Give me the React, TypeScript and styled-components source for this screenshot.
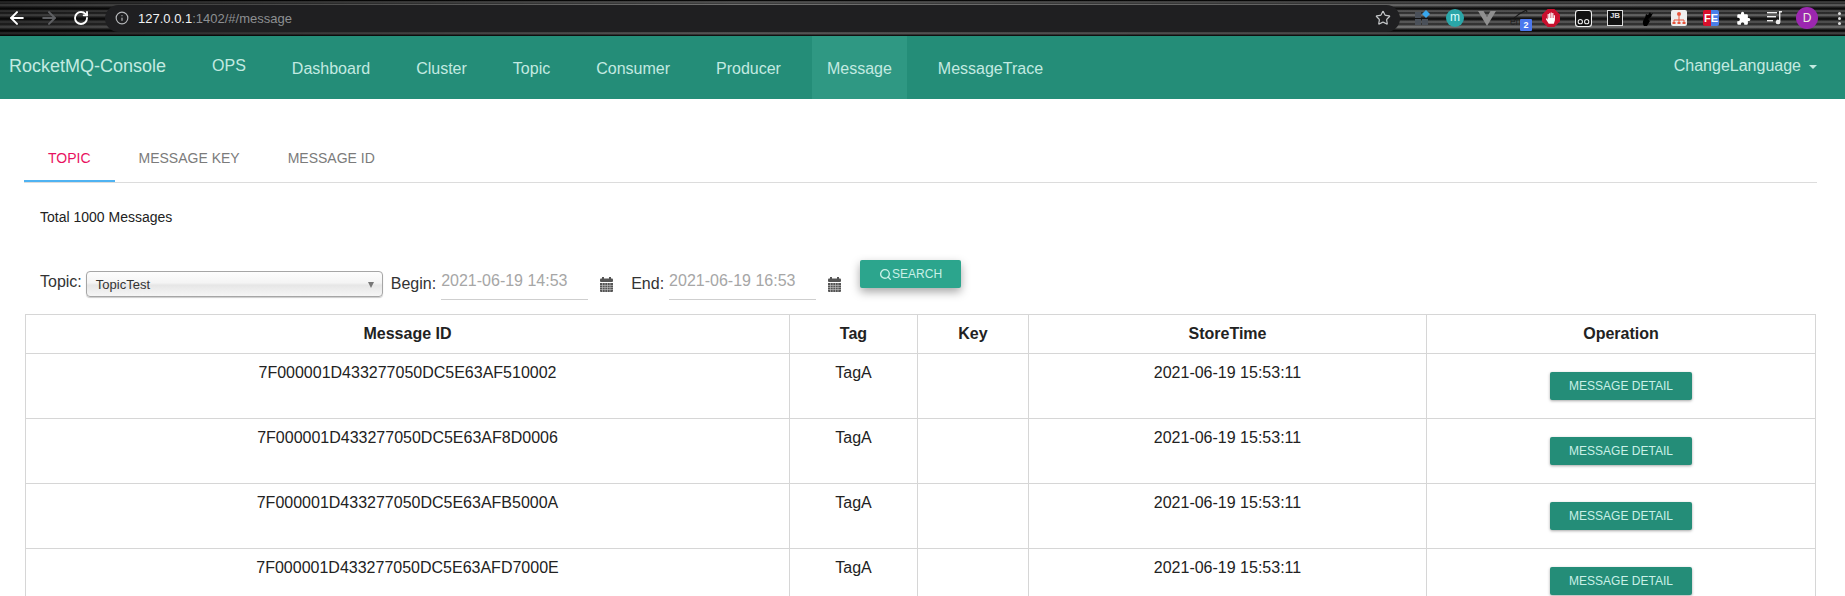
import React from "react";
import styled, { createGlobalStyle } from "styled-components";
import { ArrowLeft, ArrowRight, Info, RotateCw, Search, Star } from "lucide-react";

const GlobalStyle = createGlobalStyle`
  html, body {
    margin: 0;
    height: 596px;
    overflow: hidden;
    background: #fff;
    font-family: "Liberation Sans", Arial, sans-serif;
  }
`;

const teal = "#248d78";
const navText = "#c3eae1";

const BrowserBar = styled.div`
  height: 36px;
  display: flex;
  align-items: center;
  padding: 0 0 0 2px;
  box-sizing: border-box;
  overflow: hidden;
  background:
    linear-gradient(90deg, rgba(0, 0, 0, 0.55) 0, rgba(0, 0, 0, 0) 40%, rgba(0, 0, 0, 0.25) 100%),
    linear-gradient(180deg, #000 0, #111 1px, #7a7a7a 2px, #222 3px, #8a8a8a 5px, #333 7px, #050505 9px, #777 11px, #222 13px, #8f8f8f 15px, #3a3a3a 17px, #0a0a0a 19px, #777 22px, #2a2a2a 24px, #999 27px, #333 29px, #000 31px, #666 33px, #000 36px);
`;

const NavIcon = styled.span<{ $dim?: boolean }>`
  width: 30px;
  height: 24px;
  margin-right: 2px;
  flex-shrink: 0;
  display: flex;
  align-items: center;
  justify-content: center;
  color: ${({ $dim }) => ($dim ? "#5f6063" : "#fff")};
`;

const Omnibox = styled.div`
  margin-left: 7px;
  width: 1295px;
  height: 27px;
  flex-shrink: 0;
  border-radius: 14px;
  background: #1f1f21;
  display: flex;
  align-items: center;
  padding: 0 9px 0 10px;
  box-sizing: border-box;
  font-size: 13px;
  color: #8d8f92;
`;

const Host = styled.span`
  color: #f1f3f4;
  margin-left: 9px;
`;

const StarSlot = styled.span`
  margin-left: auto;
  display: flex;
  color: #c4c6c8;
`;

const Extensions = styled.div`
  display: flex;
  flex-shrink: 0;
  align-items: center;
  margin-left: 7px;
`;

const Ext = styled.span`
  position: relative;
  width: 32px;
  height: 24px;
  display: flex;
  align-items: center;
  justify-content: center;
`;

const MBadge = styled.span`
  width: 18px;
  height: 18px;
  border-radius: 50%;
  background: #2aa6a8;
  color: #dff;
  font-size: 12px;
  line-height: 16px;
  text-align: center;
`;

const CountBadge = styled.span`
  position: absolute;
  left: 17px;
  bottom: -1px;
  width: 12px;
  height: 12px;
  border-radius: 1px;
  background: #4c78ee;
  color: #fff;
  font-size: 9px;
  font-weight: bold;
  line-height: 12px;
  text-align: center;
`;

const EnLabel = styled.span`
  position: absolute;
  left: 7px;
  bottom: 3px;
  color: #222;
  font-size: 10px;
  line-height: 10px;
`;

const InkStroke = styled.svg`
  margin: 0 0 10px 4px;
`;

const JbBox = styled.span`
  width: 14px;
  height: 14px;
  border: 1px solid #ddd;
  background: #111;
  color: #ddd;
  font-size: 8px;
  font-weight: bold;
  line-height: 10px;
  text-align: center;
`;

const FeBox = styled.span`
  width: 16px;
  height: 16px;
  border-radius: 2px;
  background: linear-gradient(90deg, #d8102b 0 50%, #4a7fe8 50% 100%);
  color: #fff;
  font-size: 11px;
  font-weight: bold;
  line-height: 16px;
  text-align: center;
`;

const Avatar = styled.span`
  width: 22px;
  height: 22px;
  border-radius: 50%;
  background: #9c27b0;
  color: #eed;
  font-size: 12px;
  line-height: 22px;
  text-align: center;
`;

const Dots = styled.span`
  width: 3px;
  height: 3px;
  border-radius: 50%;
  background: #ddd;
  box-shadow: 0 -5px 0 #ddd, 0 5px 0 #ddd;
`;

const NavBar = styled.nav`
  height: 63px;
  background: ${teal};
  display: flex;
  align-items: stretch;
  padding: 0 28px 0 9px;
  color: ${navText};
  font-size: 16px;
`;

const Brand = styled.div`
  font-size: 18px;
  padding-top: 20px;
  margin-right: 31px;
`;

const NavItem = styled.div<{ $active?: boolean; $high?: boolean }>`
  padding: ${({ $high }) => ($high ? "21px" : "24px")} 15px 0;
  margin-left: ${({ $high }) => ($high ? "0" : "16px")};
  background: ${({ $active }) => ($active ? "#2f9883" : "transparent")};
`;

const LangMenu = styled.div`
  margin-left: auto;
  padding-top: 21px;
  display: flex;
  align-items: flex-start;
`;

const Caret = styled.span`
  width: 0;
  height: 0;
  margin: 8px 0 0 8px;
  border-left: 4px solid transparent;
  border-right: 4px solid transparent;
  border-top: 4px solid ${navText};
`;

const Content = styled.main`
  padding: 0 28px 0 24px;
`;

const Tabs = styled.div`
  margin-top: 35px;
  height: 48px;
  display: flex;
  box-sizing: content-box;
  border-bottom: 1px solid #dcdcdc;
`;

const Tab = styled.div<{ $active?: boolean }>`
  padding: 16px 24px 0;
  box-sizing: border-box;
  height: 48px;
  font-size: 14px;
  color: ${({ $active }) => ($active ? "#e8115f" : "#7b7b7b")};
  border-bottom: ${({ $active }) => ($active ? "2px solid #4fb3f2" : "none")};
`;

const Total = styled.div`
  margin: 26px 0 0 16px;
  font-size: 14px;
  line-height: 16px;
  color: #222;
`;

const Filters = styled.div`
  margin: 34px 0 0 16px;
  height: 55px;
  display: flex;
  align-items: flex-start;
  font-size: 16px;
  color: #333;
`;

const FilterLabel = styled.span<{ $top: number }>`
  margin-top: ${({ $top }) => $top}px;
  line-height: 20px;
`;

const SelectBox = styled.div`
  width: 297px;
  height: 26px;
  margin: 12px 8px 0 4px;
  box-sizing: border-box;
  border: 1px solid #a6a6a6;
  border-radius: 4px;
  background: linear-gradient(180deg, #fdfdfd 0, #f4f4f4 45%, #e6e6e6 55%, #f6f6f6 100%);
  box-shadow: 0 1px 1px rgba(0, 0, 0, 0.2);
  display: flex;
  align-items: center;
  justify-content: space-between;
  padding: 1px 8px 0 9px;
  font-size: 13px;
  color: #333;
`;

const SelectArrow = styled.span`
  width: 0;
  height: 0;
  border-left: 3.5px solid transparent;
  border-right: 3.5px solid transparent;
  border-top: 6px solid #777;
`;

const DateInput = styled.div`
  width: 147px;
  height: 30px;
  margin: 11px 0 0 5px;
  box-sizing: border-box;
  border-bottom: 1px solid #cfcfcf;
  font-size: 16px;
  line-height: 22px;
  color: #a6a6a6;
`;

const CalendarSlot = styled.span<{ $gap: number }>`
  margin: 18px ${({ $gap }) => $gap}px 0 11px;
  display: flex;
`;

const SearchButton = styled.button`
  width: 101px;
  height: 28px;
  margin-top: 1px;
  padding: 0;
  border: none;
  border-radius: 2px;
  background: #2ca58d;
  color: #c9f0e7;
  font: 12px "Liberation Sans", Arial, sans-serif;
  display: flex;
  align-items: center;
  justify-content: center;
  box-shadow: 0 4px 10px rgba(0, 0, 0, 0.35);
`;

const Table = styled.table`
  width: 1790px;
  margin-left: 1px;
  border-collapse: collapse;
  table-layout: fixed;
  font-size: 16px;
  color: #222;
`;

const Th = styled.th`
  height: 38px;
  padding: 0;
  border: 1px solid #d6d6d6;
  font-size: 16px;
  text-align: center;
`;

const Td = styled.td`
  height: 65px;
  padding: 9px 0 0;
  box-sizing: border-box;
  border: 1px solid #d6d6d6;
  text-align: center;
  vertical-align: top;
  line-height: 20px;
`;

const DetailButton = styled.button`
  width: 142px;
  height: 28px;
  margin-top: 9px;
  padding: 0;
  border: none;
  border-radius: 2px;
  background: ${teal};
  color: #c9f0e7;
  font: 12px "Liberation Sans", Arial, sans-serif;
  box-shadow: 0 1px 3px rgba(0, 0, 0, 0.35);
`;

const CalendarIcon = () => (
  <svg width="15" height="15" viewBox="0 0 15 15" fill="#555">
    <rect x="3" y="0" width="2" height="3" />
    <rect x="10" y="0" width="2" height="3" />
    <rect x="1" y="1.5" width="13" height="3.5" rx="1" />
    <path d="M1 6h13v8a1 1 0 0 1-1 1H2a1 1 0 0 1-1-1z" />
    <path d="M1 8.5h13M1 10.5h13M1 12.5h13M3.5 6v9M6 6v9M8.5 6v9M11 6v9" stroke="#c8c8c8" strokeWidth="0.6" />
  </svg>
);

const messages = [
  "7F000001D433277050DC5E63AF510002",
  "7F000001D433277050DC5E63AF8D0006",
  "7F000001D433277050DC5E63AFB5000A",
  "7F000001D433277050DC5E63AFD7000E",
];

const navLinks = ["Dashboard", "Cluster", "Topic", "Consumer", "Producer", "Message", "MessageTrace"];

const App: React.FC = () => {
  return (
    <>
      <GlobalStyle />
      <BrowserBar>
        <NavIcon><ArrowLeft size={20} strokeWidth={2.4} /></NavIcon>
        <NavIcon $dim><ArrowRight size={20} strokeWidth={2.4} /></NavIcon>
        <NavIcon><RotateCw size={16} strokeWidth={2.8} /></NavIcon>
        <Omnibox>
          <Info size={14} color="#b5b7ba" />
          <Host>127.0.0.1</Host>:1402/#/message
          <StarSlot><Star size={16} strokeWidth={1.8} /></StarSlot>
        </Omnibox>
        <Extensions>
          <Ext>
            <svg width="16" height="16" viewBox="0 0 16 16">
              <rect x="0" y="2" width="6" height="6" fill="#4a5059" />
              <rect x="0" y="9" width="6" height="6" fill="#4a5059" />
              <rect x="7" y="9" width="6" height="6" fill="#4a5059" />
              <path d="M11 0l4 4-4 4-4-4z" fill="#38a7ee" />
            </svg>
          </Ext>
          <Ext><MBadge>m</MBadge></Ext>
          <Ext>
            <svg width="18" height="15" viewBox="0 0 18 15">
              <path d="M0 0h5.5L9 6l3.5-6H18L9 15z" fill="#8f8f8f" />
            </svg>
          </Ext>
          <Ext>
            <InkStroke width="16" height="11" viewBox="0 0 18 12" fill="none" stroke="#1a1a1a" strokeWidth="1.4">
              <path d="M1 11c3-1 5-5 9-6l5-3" />
              <path d="M13 1l3 3" />
            </InkStroke>
            <EnLabel>en</EnLabel>
            <CountBadge>2</CountBadge>
          </Ext>
          <Ext>
            <svg width="18" height="18" viewBox="0 0 16 16">
              <path d="M5 0h6l5 5v6l-5 5H5l-5-5V5z" fill="#c8102e" />
              <path d="M5 4.5v5L4 8 3.5 9 6 13h4.5l1-3V5.5h-1V8h-.4V3.5h-1V8h-.4V3h-1v5h-.4V3.8h-1V8h-.3V4.5z" fill="#fff" />
            </svg>
          </Ext>
          <Ext>
            <svg width="17" height="17" viewBox="0 0 16 16">
              <rect x="0.5" y="0.5" width="15" height="15" rx="2.5" fill="#111" stroke="#eee" />
              <circle cx="5" cy="11" r="2" fill="none" stroke="#eee" />
              <circle cx="11" cy="11" r="2" fill="none" stroke="#eee" />
            </svg>
          </Ext>
          <Ext><JbBox>JB</JbBox></Ext>
          <Ext>
            <svg width="14" height="15" viewBox="0 0 14 15">
              <path d="M4 15c-2-3-1-6 1-8l1-4 2 1 2-3 1 2 2-1-2 4-3 2 2 2-3 5z" fill="#000" />
            </svg>
          </Ext>
          <Ext>
            <svg width="16" height="16" viewBox="0 0 16 16">
              <rect width="16" height="16" rx="2" fill="#eee" />
              <circle cx="8" cy="4" r="2" fill="#e8553c" />
              <path d="M8 6v4M3 13v-3h10v3M8 10v3" fill="none" stroke="#e8553c" />
              <rect x="1.5" y="12" width="3" height="2" fill="#e8553c" />
              <rect x="6.5" y="12" width="3" height="2" fill="#e8553c" />
              <rect x="11.5" y="12" width="3" height="2" fill="#e8553c" />
            </svg>
          </Ext>
          <Ext><FeBox>FE</FeBox></Ext>
          <Ext>
            <svg width="15" height="15" viewBox="0 0 24 24" fill="#fff">
              <path d="M20.5 11H19V7a2 2 0 0 0-2-2h-4V3.5a2.5 2.5 0 0 0-5 0V5H4a2 2 0 0 0-2 2v3.8h1.5a2.7 2.7 0 0 1 0 5.4H2V20a2 2 0 0 0 2 2h3.8v-1.5a2.7 2.7 0 0 1 5.4 0V22H17a2 2 0 0 0 2-2v-4h1.5a2.5 2.5 0 0 0 0-5z" />
            </svg>
          </Ext>
          <Ext>
            <svg width="16" height="14" viewBox="0 0 16 14" fill="#eee">
              <rect x="0" y="1" width="10" height="1.4" />
              <rect x="0" y="5" width="9" height="1.4" />
              <rect x="0" y="9" width="6" height="1.4" />
              <path d="M12 0h3v1.5h-1.6V11a2.3 2.3 0 1 1-1.4-2.1z" />
            </svg>
          </Ext>
          <Ext><Avatar>D</Avatar></Ext>
          <Ext><Dots /></Ext>
        </Extensions>
      </BrowserBar>
      <NavBar>
        <Brand>RocketMQ-Console</Brand>
        <NavItem $high>OPS</NavItem>
        {navLinks.map((link) => (
          <NavItem key={link} $active={link === "Message"}>{link}</NavItem>
        ))}
        <LangMenu>ChangeLanguage<Caret /></LangMenu>
      </NavBar>
      <Content>
        <Tabs>
          <Tab $active>TOPIC</Tab>
          <Tab>MESSAGE KEY</Tab>
          <Tab>MESSAGE ID</Tab>
        </Tabs>
        <Total>Total 1000 Messages</Total>
        <Filters>
          <FilterLabel $top={13}>Topic:</FilterLabel>
          <SelectBox>TopicTest<SelectArrow /></SelectBox>
          <FilterLabel $top={15}>Begin:</FilterLabel>
          <DateInput>2021-06-19 14:53</DateInput>
          <CalendarSlot $gap={17}><CalendarIcon /></CalendarSlot>
          <FilterLabel $top={15}>End:</FilterLabel>
          <DateInput>2021-06-19 16:53</DateInput>
          <CalendarSlot $gap={18}><CalendarIcon /></CalendarSlot>
          <SearchButton><Search size={13} strokeWidth={2.6} />SEARCH</SearchButton>
        </Filters>
        <Table>
          <colgroup>
            <col style={{ width: 764 }} />
            <col style={{ width: 128 }} />
            <col style={{ width: 111 }} />
            <col style={{ width: 398 }} />
            <col style={{ width: 389 }} />
          </colgroup>
          <thead>
            <tr>
              <Th>Message ID</Th>
              <Th>Tag</Th>
              <Th>Key</Th>
              <Th>StoreTime</Th>
              <Th>Operation</Th>
            </tr>
          </thead>
          <tbody>
            {messages.map((id) => (
              <tr key={id}>
                <Td>{id}</Td>
                <Td>TagA</Td>
                <Td></Td>
                <Td>2021-06-19 15:53:11</Td>
                <Td><DetailButton>MESSAGE DETAIL</DetailButton></Td>
              </tr>
            ))}
          </tbody>
        </Table>
      </Content>
    </>
  );
};

export default App;
